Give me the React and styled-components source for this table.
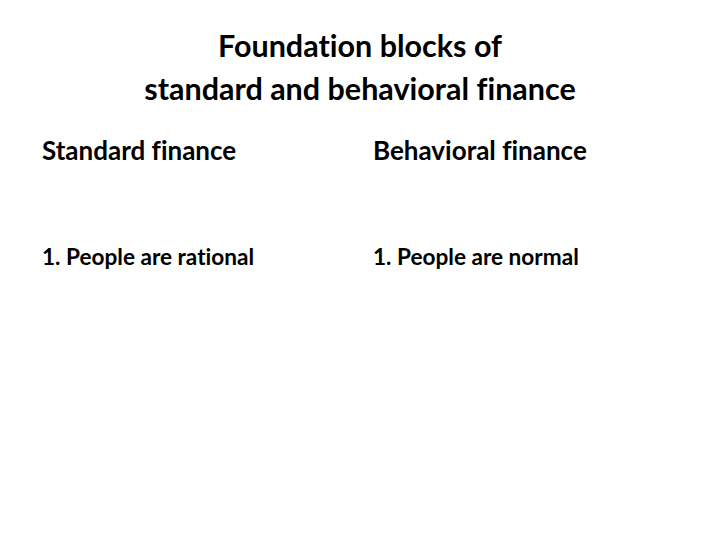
import React from 'react';
import styled, { createGlobalStyle } from 'styled-components';

const GlobalStyle = createGlobalStyle`
    html, body {
        margin: 0;
        padding: 0;
        background: #ffffff;
    }
`;

const Slide = styled.div`
    width: 720px;
    height: 540px;
    background-color: #ffffff;
    color: #000000;
    font-family: Lato, "Open Sans", sans-serif;
    font-variant-ligatures: none;
    padding-top: 24px;
    box-sizing: border-box;
    overflow: hidden;
`;

const Title = styled.h1`
    margin: 0;
    font-size: 30.5px;
    line-height: 43px;
    font-weight: 700;
    text-align: center;
`;

const Columns = styled.div`
    display: grid;
    grid-template-columns: 331px 1fr;
    padding-left: 42px;
    margin-top: 25px;
`;

const Column = styled.div`
    display: flex;
    flex-direction: column;
    gap: 77px;
`;

const Heading = styled.h2`
    margin: 0;
    font-size: 26px;
    line-height: 30px;
    font-weight: 700;
    white-space: nowrap;
`;

const Item = styled.p`
    margin: 0;
    font-size: 22.6px;
    line-height: 30px;
    font-weight: 700;
    white-space: nowrap;
`;

const columns = [
    { head: 'Standard finance', items: ['1. People are rational'] },
    { head: 'Behavioral finance', items: ['1. People are normal'] },
];

function App() {
    return (
        <>
            <GlobalStyle />
            <Slide>
                <Title>
                    Foundation blocks of
                    <br />
                    standard and behavioral finance
                </Title>
                <Columns>
                    {columns.map((col) => (
                        <Column key={col.head}>
                            <Heading>{col.head}</Heading>
                            {col.items.map((item) => (
                                <Item key={item}>{item}</Item>
                            ))}
                        </Column>
                    ))}
                </Columns>
            </Slide>
        </>
    );
}

export default App;
